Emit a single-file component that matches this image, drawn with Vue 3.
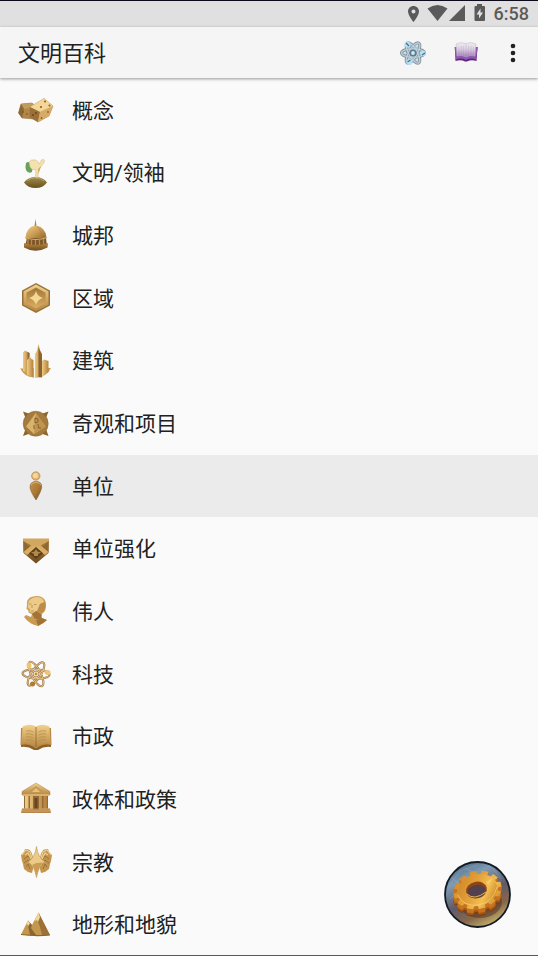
<script setup>
import { ref } from 'vue'

const entries = [
  { id: 'concepts', label: '概念' },
  { id: 'leaders', label: '文明/领袖' },
  { id: 'citystates', label: '城邦' },
  { id: 'districts', label: '区域' },
  { id: 'buildings', label: '建筑' },
  { id: 'wonders', label: '奇观和项目' },
  { id: 'units', label: '单位' },
  { id: 'promotions', label: '单位强化' },
  { id: 'people', label: '伟人' },
  { id: 'technology', label: '科技' },
  { id: 'civics', label: '市政' },
  { id: 'policies', label: '政体和政策' },
  { id: 'religion', label: '宗教' },
  { id: 'terrain', label: '地形和地貌' }
]
const selected = ref('units')

// Outline of a cog seen at an angle: a toothed ellipse turned by `tilt` radians.
function cog(cx, cy, rx, ry, tilt, teeth) {
  const points = []
  const step = (Math.PI * 2) / teeth
  const profile = [[-0.33, 0.84], [-0.27, 1], [0.27, 1], [0.33, 0.84]]
  for (let i = 0; i < teeth; i++) {
    for (const [offset, scale] of profile) {
      const a = (i + offset) * step
      const x = Math.cos(a) * rx * scale
      const y = Math.sin(a) * ry * scale
      const px = cx + x * Math.cos(tilt) - y * Math.sin(tilt)
      const py = cy + x * Math.sin(tilt) + y * Math.cos(tilt)
      points.push(`${px.toFixed(1)},${py.toFixed(1)}`)
    }
  }
  return points.join(' ')
}
const cogLayers = [7, 6, 5, 4, 3, 2, 1].map((d) => ({
  points: cog(33.5, 29 + d, 24.5, 19, -0.25, 12),
  fill: d > 6 ? '#7c3c12' : d > 4 ? '#a65716' : '#c57420'
}))
const cogFace = cog(33.5, 29, 24.5, 19, -0.25, 12)
</script>

<template>
  <div class="screen">
    <svg class="defs" aria-hidden="true">
      <defs>
        <linearGradient id="gold" x1="0" y1="0" x2="1" y2="1">
          <stop offset="0" stop-color="#f0d08c" /><stop offset=".5" stop-color="#c99a52" /><stop offset="1" stop-color="#855d28" />
        </linearGradient>
        <linearGradient id="goldDown" x1="0" y1="0" x2="0" y2="1">
          <stop offset="0" stop-color="#f2d28c" /><stop offset="1" stop-color="#b5853f" />
        </linearGradient>
        <linearGradient id="goldUp" x1="0" y1="0" x2="0" y2="1">
          <stop offset="0" stop-color="#a0763a" /><stop offset="1" stop-color="#dcae63" />
        </linearGradient>
        <linearGradient id="bronze" x1="0" y1="0" x2="0" y2="1">
          <stop offset="0" stop-color="#b9893f" /><stop offset="1" stop-color="#6c491e" />
        </linearGradient>
        <linearGradient id="tower" x1="0" y1="0" x2="1" y2="0">
          <stop offset="0" stop-color="#efcb83" /><stop offset="1" stop-color="#b3803b" />
        </linearGradient>
        <linearGradient id="moss" x1="0" y1="0" x2="0" y2="1">
          <stop offset="0" stop-color="#a08c50" /><stop offset="1" stop-color="#66511f" />
        </linearGradient>
        <linearGradient id="drop" x1="0" y1="0" x2="1" y2="1">
          <stop offset="0" stop-color="#c39249" /><stop offset=".55" stop-color="#a87734" /><stop offset="1" stop-color="#6f4a1f" />
        </linearGradient>
        <linearGradient id="violet" x1="0" y1="0" x2="0" y2="1">
          <stop offset="0" stop-color="#efedf0" /><stop offset=".45" stop-color="#dcd0e2" /><stop offset="1" stop-color="#a77dbd" />
        </linearGradient>
        <linearGradient id="orb" x1=".2" y1="0" x2=".7" y2="1">
          <stop offset="0" stop-color="#4c6784" /><stop offset=".25" stop-color="#7f9bb2" /><stop offset=".55" stop-color="#5f5a68" /><stop offset=".78" stop-color="#86684c" /><stop offset="1" stop-color="#cdb76c" />
        </linearGradient>
        <linearGradient id="cogGold" x1="0" y1=".2" x2="1" y2=".8">
          <stop offset="0" stop-color="#cf8829" /><stop offset=".4" stop-color="#e3a03a" /><stop offset=".7" stop-color="#f3bf55" /><stop offset="1" stop-color="#c97f20" />
        </linearGradient>
      </defs>
    </svg>

    <div class="status">
      <svg class="status-icons" viewBox="0 0 80 20" aria-hidden="true">
        <path fill-rule="evenodd" d="M5.500 2C2.400 2 0 4.400 0 7.500 0 11.500 5.500 18 5.500 18S11 11.500 11 7.500C11 4.400 8.600 2 5.500 2ZM5.500 5.500A2 2 0 1 1 5.500 9.500A2 2 0 1 1 5.500 5.500Z" />
        <path d="M19.500 4.500Q29.500-2.500 39.500 4.500L29.500 17Z" />
        <path d="M57 1V17H41Z" />
        <path fill-rule="evenodd" d="M69 0H74V2H76Q77 2 77 3V16Q77 17 76 17H67.500Q66.500 17 66.500 16V3Q66.500 2 67.500 2H69ZM72.500 4.500L68.500 10.500H71V14.500L75 8.500H72.500Z" />
      </svg>
      <time>6:58</time>
    </div>

    <header class="toolbar">
      <h1>文明百科</h1>
      <button type="button" class="tool" aria-label="科技">
        <svg viewBox="0 0 30 30">
          <g fill="#b4c9d4" stroke="#84939c" stroke-width="3" fill-opacity=".6">
            <ellipse cx="15" cy="15" rx="11.500" ry="4.200" />
            <ellipse cx="15" cy="15" rx="11.500" ry="4.200" transform="rotate(60 15 15)" />
            <ellipse cx="15" cy="15" rx="11.500" ry="4.200" transform="rotate(120 15 15)" />
          </g>
          <g fill="none" stroke="#bcd3de" stroke-width="1.200">
            <ellipse cx="15" cy="15" rx="11.500" ry="4.200" />
            <ellipse cx="15" cy="15" rx="11.500" ry="4.200" transform="rotate(60 15 15)" />
            <ellipse cx="15" cy="15" rx="11.500" ry="4.200" transform="rotate(120 15 15)" />
          </g>
          <circle cx="15" cy="15" r="3.600" fill="#5b7d90" /><circle cx="15" cy="15" r="1.900" fill="#cfe8f2" />
          <g fill="#b4e0f5"><circle cx="9.500" cy="6.500" r="3" /><circle cx="25" cy="15.500" r="2.800" /><circle cx="11.500" cy="24" r="3" /></g>
          <path d="M8 5L11 8M24 17L27 15M9.500 24L12.500 22" stroke="#3f6f8d" stroke-width="1.200" />
        </svg>
      </button>
      <button type="button" class="tool" aria-label="市政">
        <svg viewBox="0 0 30 30">
          <path d="M4 9L4.500 23Q10 21.500 14 23.500H16Q20 21.500 25.500 23L26.500 9Z" fill="#5d2380" />
          <path d="M3.500 9L5 21.500Q10 19.500 15 22Q20 19.500 25 21.500L26.800 9Z" fill="#8d57ad" />
          <path d="M5 6Q10 3.500 15 5.500Q20 3.500 25 6L24 18Q19 16.500 15 19Q11 16.500 6 18Z" fill="url(#violet)" stroke="#bcb6c0" stroke-width=".500" />
          <path d="M15 6V19M8 9V17M10.500 8V17M12.500 8V18M17.500 8V18M20 8V17M22.500 9V17" stroke="#7d6c84" stroke-opacity=".25" stroke-width=".600" />
        </svg>
      </button>
      <button type="button" class="more" aria-label="更多">
        <svg viewBox="0 0 24 24"><circle cx="12" cy="5" r="2.300" /><circle cx="12" cy="12" r="2.300" /><circle cx="12" cy="19" r="2.300" /></svg>
      </button>
    </header>

    <nav class="categories">
      <a v-for="entry in entries" :key="entry.id" :href="'#' + entry.id" class="entry" :class="{ active: selected === entry.id }" @click="selected = entry.id">
        <svg class="icon" viewBox="0 0 36 36" aria-hidden="true">
          <g v-if="entry.id === 'concepts'" stroke-linejoin="round">
            <path d="M3 12L14 11 20 18 16 27 4 26 .500 21Z" fill="#b08748" stroke="#8a6430" stroke-width=".500" />
            <path d="M3 12L15 11 17 15 6 17Z" fill="#c29c5c" />
            <path d="M3 12L6 17 4 26 .500 21Z" fill="#8e6834" />
            <path d="M12 15L26 6.500 35 14 31 24 20 30 11.500 25Z" fill="#d2a968" stroke="#a07a42" stroke-width=".500" />
            <path d="M12 15L26 6.500 35 14 22 20Z" fill="#f3d799" />
            <path d="M12 15L22 20 20 30 11.500 25Z" fill="#9a7038" />
            <path d="M22 20L35 14 31 24 20 30Z" fill="#d5ab66" />
            <g fill="#a8552a"><circle cx="27" cy="9.500" r="1.100" /><circle cx="31.500" cy="13.500" r="1.100" /><circle cx="23" cy="15" r="1.100" /><circle cx="23.500" cy="26" r=".900" /><circle cx="30" cy="20" r=".900" /></g>
            <g fill="#6b3d18"><circle cx="18" cy="21" r=".900" /><circle cx="15" cy="23" r=".900" /><circle cx="5" cy="20" r=".700" /><circle cx="9" cy="22" r=".700" /></g>
          </g>
          <g v-else-if="entry.id === 'leaders'">
            <path d="M6 27.500Q10 22 17.500 22T29 27.500Q25 33 17.500 33T6 27.500Z" fill="url(#moss)" />
            <path d="M9 26Q12 23 17.500 23T26 26" fill="none" stroke="#b29c5f" />
            <path d="M8 8Q10 6 13 8L14.500 12 14 17Q10 19 8 15Q7 12 8 8Z" fill="#6aa05c" />
            <path d="M11 7Q13 4 17.500 5Q20 6 21.500 9L23.500 5Q25.500 3.500 26.500 5.500Q26 9 24 10L21.500 14Q19.500 18 20 22.500H17Q18.500 19 17.500 14.500L14 14.500 12 12Z" fill="#f3e2ae" stroke="#c6b27c" stroke-width=".500" />
            <path d="M20 14L23 11 20.500 19Z" fill="#cfae64" />
          </g>
          <g v-else-if="entry.id === 'citystates'">
            <path d="M17.500 1L18.500 8H16.500Z" fill="#a5834c" />
            <path d="M7.500 20Q8 9 17.500 7.500Q28 9 28.500 20L27 22H9Z" fill="url(#gold)" />
            <path d="M19 8Q24 13 24 21" fill="none" stroke="#966b32" stroke-opacity=".5" stroke-width=".600" />
            <path d="M9 20H28L29 28H7Z" fill="#7b5427" />
            <path d="M10 21V26M13.500 22V27M17.500 22V27M21.500 22V27M25.500 21V26" stroke="#b98c4b" stroke-width="1.300" />
            <path d="M6 25Q17.500 29 30 25L29.500 29.500Q17.500 36 6 29.500Z" fill="url(#bronze)" />
            <path d="M7 19.500Q17.500 23.500 29 19.500" fill="none" stroke="#d9ae69" stroke-width="1.200" />
          </g>
          <g v-else-if="entry.id === 'districts'" stroke-linejoin="round">
            <path d="M18 3L32 10.500V25.500L18 33 4 25.500V10.500Z" fill="#96703a" />
            <path d="M18 4.500L30.500 11.200V24.800L18 31.500 5.500 24.800V11.200Z" fill="url(#goldDown)" />
            <path d="M18 7.500L27.500 12.700V23.300L18 28.500 8.500 23.300V12.700Z" fill="url(#goldUp)" />
            <path d="M18 11Q19.500 16.500 25 18Q19.500 19.500 18 25Q16.500 19.500 11 18Q16.500 16.500 18 11Z" fill="#f5d794" />
          </g>
          <g v-else-if="entry.id === 'buildings'">
            <path d="M2 25Q4 26 6 25H16V34.500Q6 34 2 25ZM17 25H33Q29 34 17 34.500Z" fill="#cb9b52" />
            <path d="M5 9.500L7 7.500 11.500 10V31L5 28Z" fill="url(#tower)" /><path d="M9.500 9L11.500 10V31H9.500Z" fill="#94693a" />
            <path d="M9 17L10.500 16 11.500 13 13.500 16 15.500 17V34.500L9 32Z" fill="url(#tower)" />
            <path d="M17 11L19 8 20.500 1 22 7 24 11V34.500H17Z" fill="url(#tower)" /><path d="M20.500 4L22 8 24 12V34H20.500Z" fill="#8c632e" />
            <path d="M24 18L26 16.500 30.500 18V29L24 34Z" fill="url(#tower)" />
            <path d="M16.300 14V35" stroke="#f8f0dc" stroke-width=".800" />
          </g>
          <g v-else-if="entry.id === 'wonders'">
            <path d="M5 5.500L12 8H23L30.500 5.500 28 12V23L30.500 30 23 27.500H12L5 30 7.500 23V12Z" fill="#8d662f" />
            <circle cx="17.700" cy="17.700" r="12.500" fill="#a57b3d" stroke="#83602f" stroke-width=".500" />
            <path d="M17.700 7L8 20.500 16 28 27.500 20.500Z" fill="#dab26c" /><path d="M17.700 7L27.500 20.500 16 28Z" fill="#c19450" />
            <path d="M17 12L20 13V16L17 17ZM16 19V23M20 18L20.500 22 23 22" fill="none" stroke="#7d5a28" stroke-width=".900" />
          </g>
          <g v-else-if="entry.id === 'units'">
            <circle cx="17.800" cy="8" r="4.200" fill="#dfb570" stroke="#a57d45" stroke-width=".600" /><circle cx="17.400" cy="7.500" r="2.600" fill="#f6d79a" />
            <path d="M12 19Q12 13.500 18 13.500T23.700 19Q23.500 23 18 32Q12 23 12 19Z" fill="url(#drop)" stroke="#82592a" stroke-width=".500" />
            <path d="M13 17Q14 14.500 18 14.500T23 17" fill="none" stroke="#e0b871" stroke-width=".800" />
          </g>
          <g v-else-if="entry.id === 'promotions'">
            <path d="M5 8H31L30.500 22L18 32.500 5.500 22Z" fill="url(#bronze)" />
            <path d="M5 7.500H31V10L25 13 18 18 11 13 5 10Z" fill="#d2a861" />
            <path d="M5.500 10L12 16 5.500 21ZM30.500 10L24 16 30.500 21Z" fill="#8f6834" />
            <path d="M5.500 21L14 14 18 17 22 14 30.500 21 27 24 18 16.500 9 24Z" fill="#d9ad63" />
            <path d="M18 16L25 22.500 18 28 11 22.500Z" fill="#5d401b" />
            <path d="M18 18L19.500 20.500 23 21.500 20 23 20 25H16L16 23 13 21.500 16.500 20.500Z" fill="#b28a48" />
          </g>
          <g v-else-if="entry.id === 'people'">
            <path d="M9 12Q8 5 15 3.500Q23 1.500 27 7Q29 12 27 18L24 21 24 25 29 27Q26 30 20 33Q11 31 6 24L8 22 13 24 14 21 11 20 10 17 8.500 16Z" fill="#cc9e56" />
            <path d="M10 12Q10 5 18 4Q25 4 26 9L22 11 20 17 16 20 11.500 19 12 16 10 15Z" fill="#eccb88" />
            <path d="M22 11L27 9 27.500 14 26 18 23 20 19 18Z" fill="#bd8c48" />
            <path d="M14 21L18 18 23 21 23 26 17 26Z" fill="#a1733a" />
            <path d="M11 11H13.500M16 11.500H18.500M14 12V15M13 18H16" stroke="#b48a50" stroke-width=".800" />
            <path d="M7 23.500L13 25 19 26 18 32Q11 30 7 23.500Z" fill="#c99a51" />
            <path d="M20 33L18 27 24 25 29 27Q26 30 20 33Z" fill="#a47334" />
          </g>
          <g v-else-if="entry.id === 'technology'">
            <g fill="none" stroke="#957044" stroke-width="2">
              <ellipse cx="18" cy="18" rx="13.500" ry="4.700" transform="rotate(3 18 18)" />
              <ellipse cx="18" cy="18" rx="13.500" ry="4.700" transform="rotate(63 18 18)" />
              <ellipse cx="18" cy="18" rx="13.500" ry="4.700" transform="rotate(123 18 18)" />
            </g>
            <g fill="none" stroke="#e8c68b" stroke-width=".900">
              <ellipse cx="18" cy="18" rx="13.500" ry="4.700" transform="rotate(3 18 18)" />
              <ellipse cx="18" cy="18" rx="13.500" ry="4.700" transform="rotate(63 18 18)" />
              <ellipse cx="18" cy="18" rx="13.500" ry="4.700" transform="rotate(123 18 18)" />
            </g>
            <circle cx="18" cy="18" r="3" fill="#f4daa4" stroke="#a07a4c" stroke-width=".800" />
            <circle cx="18" cy="18" r="1.200" fill="#bc8746" />
            <g fill="#edc573"><ellipse cx="11" cy="9.500" rx="2.400" ry="3.200" /><ellipse cx="29.500" cy="16.500" rx="3" ry="2.400" /><circle cx="14.500" cy="28" r="2.500" fill="#b07a34" /></g>
          </g>
          <g v-else-if="entry.id === 'civics'">
            <path d="M3.500 10L3 28Q10 27 16 31H20Q26 27 33 28L32.500 10Z" fill="#8b5f2b" />
            <path d="M3 9L2.500 26Q11 24 18 29.500Q25 24 33.500 26L33 9Z" fill="#b98a44" />
            <path d="M4.500 7.500Q12 4 18 7.500V28.500Q11 23 3.500 25Z" fill="url(#goldDown)" />
            <path d="M18 7.500Q24 4 31.500 7.500L32.500 25Q25 23 18 28.500Z" fill="url(#goldDown)" />
            <path d="M18 8V28" stroke="#8d6632" stroke-width=".800" />
            <path d="M8 12Q12 11 15.500 13M8 15Q12 14 15.500 16M8 18Q12 17 15.500 19M8 21Q12 20 15.500 22M20.500 13Q24 11 28 12M20.500 16Q24 14 28 15M20.500 19Q24 17 28 18M20.500 22Q24 20 28 21" fill="none" stroke="#b08849" stroke-width=".700" />
          </g>
          <g v-else-if="entry.id === 'policies'">
            <path d="M18 2L32 10.500V14H4V10.500Z" fill="url(#goldDown)" stroke="#ab8449" stroke-width=".500" />
            <path d="M18 5L27 11.500H9Z" fill="#c1995a" /><path d="M18 7L22 11H14Z" fill="#e6c27a" />
            <path d="M6 14H30V29H6Z" fill="#94693a" />
            <path d="M7 15H10.500V28H7ZM12 15H15V28H12ZM21 15H24V28H21ZM25.500 15H29V28H25.500Z" fill="url(#tower)" />
            <path d="M16.500 17H19.500V29H16.500Z" fill="#674621" />
            <path d="M5 13H31V15H5Z" fill="#dbb06a" />
            <path d="M4 27.500H32L33 32H3Z" fill="#b5854a" /><path d="M4 28H15M21 28H32M3.500 30H32.500" stroke="#d9ae69" stroke-width=".800" />
          </g>
          <g v-else-if="entry.id === 'religion'">
            <g v-for="side in ['', 'matrix(-1 0 0 1 37 0)']" :key="side" :transform="side || undefined">
              <path d="M15 17Q15 8 11 5.500L7 5 6 8 3 11 4 17 5 20 6 25 10 28 14 29 15 25Z" fill="#c4954e" />
              <path d="M6 15L10 12 14 17M6 19L10 16 13 21M8 23L10 20 12 25" fill="none" stroke="#936a34" stroke-width=".800" />
              <path d="M4 11L8 6 12 8 14 14M7 11L10 9 13 15" fill="none" stroke="#edcf8e" stroke-width="1.200" />
            </g>
            <path d="M18.500 2.500Q20 13.500 27 18Q20.500 22 18.500 33.500Q16.500 22 10 18Q17 13.500 18.500 2.500Z" fill="#ecca88" stroke="#b08748" stroke-width=".500" />
            <path d="M18.500 19L26 18.500Q20.500 22 18.500 33Q16.500 23 14 21Z" fill="#cc9d54" />
          </g>
          <g v-else>
            <path d="M3 27.500L10 13.500 14 18 20.500 5.500 32 28Q18 30 3 27.500Z" fill="#c4974f" />
            <path d="M10 13.500L14 18 13 21 18 28H12L10.500 21Z" fill="#8d6530" />
            <path d="M20.500 5.500L32 28H24L22 20 20 15Z" fill="#9b7139" />
            <path d="M20.500 5.500L16.500 14 19 13 20 15 22 10ZM10 13.500L7.500 18 9 17 10.500 19 12 16Z" fill="#efd7a0" />
            <path d="M3 27.500Q18 29.500 32 28" fill="none" stroke="#8a642f" stroke-width="1.200" />
          </g>
        </svg>
        <span>{{ entry.label }}</span>
      </a>
    </nav>

    <button type="button" class="fab" aria-label="设置">
      <svg viewBox="0 0 67 67">
        <circle cx="33.500" cy="33.500" r="32.500" fill="url(#orb)" stroke="#111a25" stroke-width="1.800" />
        <path d="M5 25L16 10 33 4M6 38L14 30M21 7L33 13M49 8L57 18M8 17L15 23" fill="none" stroke="#b2cad8" stroke-opacity=".3" stroke-width=".800" />
        <ellipse cx="36" cy="41" rx="22" ry="16" fill="#4a2a1c" opacity=".45" />
        <polygon v-for="layer in cogLayers" :key="layer.points" :points="layer.points" :fill="layer.fill" />
        <polygon :points="cogFace" fill="url(#cogGold)" />
        <ellipse cx="33.500" cy="29" rx="20" ry="15.500" transform="rotate(-14 33.500 29)" fill="url(#cogGold)" />
        <path d="M14 34Q19 46 35 44Q50 40 53 26" fill="none" stroke="#ffd978" stroke-opacity=".6" />
        <ellipse cx="32.500" cy="29" rx="10.500" ry="8.300" transform="rotate(-12 32.500 29)" fill="#8f4513" />
        <ellipse cx="32.500" cy="30.500" rx="9.300" ry="6.500" transform="rotate(-12 32.500 30.500)" fill="#54404c" />
        <path d="M23 33Q30 40 42 31" fill="none" stroke="#f6c45c" stroke-width=".900" />
        <path d="M42 21L49 17 44 24Z" fill="#ffe897" opacity=".4" />
      </svg>
    </button>
    <div class="edge"></div>
  </div>
</template>

<style>
body { background: #fafafa; }
</style>

<style scoped>
.screen {
  position: relative;
  display: flex;
  flex-direction: column;
  min-height: 100vh;
  color: #212121;
  font-family: Roboto, "Noto Sans CJK SC", sans-serif;
  background: #fafafa;
}
.defs { position: absolute; width: 0; height: 0; }
.status {
  display: flex;
  justify-content: flex-end;
  align-items: center;
  gap: 6px;
  box-sizing: border-box;
  height: 27px;
  padding-right: 9px;
  border-top: 1px solid #0b0a1a;
  background: #e0e0e0;
  color: #5a5a5a;
}
.status-icons { width: 80px; height: 20px; fill: currentColor; }
.status time { font-size: 18px; font-weight: 500; line-height: 26px; }
.toolbar {
  position: relative;
  display: flex;
  align-items: center;
  height: 51px;
  padding: 0 13px 0 18px;
  background: #f5f5f5;
  box-shadow: 0 1px 3px rgba(0, 0, 0, 0.4);
}
h1 { flex: 1; margin: 0; padding-top: 2px; font-size: 22px; font-weight: 400; line-height: 32px; }
button { padding: 0; border: 0; background: none; cursor: pointer; }
button svg { display: block; width: 100%; height: 100%; }
.tool { width: 30px; height: 30px; margin-right: 23px; }
.more { width: 24px; height: 24px; fill: #212121; }
.tool + .more { margin-left: -3px; }
.categories { flex: 1; display: grid; grid-auto-rows: 1fr; padding-top: 1px; }
.entry {
  display: flex;
  align-items: center;
  gap: 18px;
  min-height: 48px;
  padding: 0 18px;
  color: inherit;
  font-size: 21px;
  line-height: 30px;
  text-decoration: none;
}
.entry span { padding-top: 1px; }
.entry.active { background: #ebebeb; }
.icon { flex: none; width: 36px; height: 36px; }
.fab {
  position: fixed;
  right: 27px;
  bottom: 28px;
  width: 67px;
  height: 67px;
  border-radius: 50%;
}
.edge { position: fixed; left: 0; right: 0; bottom: 0; height: 1px; background: #39685c; }
</style>
